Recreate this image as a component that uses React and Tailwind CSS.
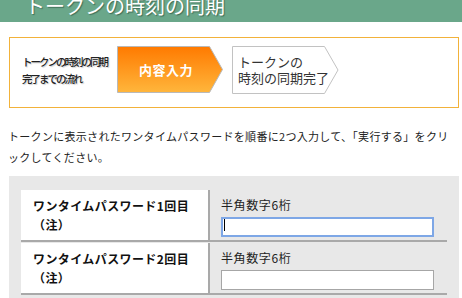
// App.jsx — トークンの時刻の同期 (入力画面)
const JP = "font-['Noto_Sans_CJK_JP','Noto_Sans',sans-serif]"

function OrangeStep() {
  return (
    <div className="relative w-[106px] h-[47px] flex items-center justify-center pr-[8px]">
      <svg className="absolute inset-0" width="106" height="47" viewBox="0 0 106 47">
        <defs>
          <linearGradient id="og" x1="0" y1="0" x2="0" y2="1">
            <stop offset="0" stopColor="#ff7a00" />
            <stop offset="1" stopColor="#ffb63c" />
          </linearGradient>
        </defs>
        <polygon points="0.5,0.5 92.5,0.5 105.5,23.5 92.5,46.5 0.5,46.5" fill="url(#og)" stroke="#b9b9b9" />
      </svg>
      <span className="relative text-[13px] font-bold text-white tracking-[0.5px]">内容入力</span>
    </div>
  )
}

function WhiteStep() {
  return (
    <div className="relative w-[107px] h-[48px] pl-[6px] pt-[8px]">
      <svg className="absolute inset-0" width="107" height="48" viewBox="0 0 107 48">
        <polygon points="0.5,0.5 92.5,0.5 106,24 92.5,47.5 0.5,47.5" fill="#fff" stroke="#c2c2c2" />
      </svg>
      <p className="relative text-[13px] leading-[16px] text-[#333]">
        トークンの<br />時刻の同期完了
      </p>
    </div>
  )
}

function Row({ n, focused }) {
  return (
    <div className="flex border-b-2 border-[#a9a9a9]">
      <div className="w-[189px] h-[50px] bg-white border-r-2 border-[#a9a9a9] pl-[12px] pt-[6px] text-[12px] leading-[19px] font-bold text-[#111] tracking-[0.4px]">
        ワンタイムパスワード{n}回目<br />（注）
      </div>
      <div className="flex-1 pl-[11px] pt-[6px]">
        <p className="text-[12px] leading-[18px] text-[#222] tracking-[0.6px]">半角数字6桁</p>
        <div className="relative mt-[1px] w-[213px] h-[20px]">
          <input
            type="text"
            className={`w-full h-full bg-white outline-none caret-transparent ${
              focused ? 'border-2 border-[#7ea7e6]' : 'border border-[#a6a6a6]'
            }`}
          />
          {focused && <span className="absolute left-[3px] top-[4px] w-[1px] h-[12px] bg-black" />}
        </div>
      </div>
    </div>
  )
}

export default function App() {
  return (
    <div className={`w-[462px] h-[298px] overflow-hidden bg-white ${JP}`}>
      {/* ── Title bar ───────────────────────────── */}
      <div className="h-[22px] bg-[#6aa78a] overflow-hidden pl-[25px]">
        <h1 className="-mt-[4px] text-[20px] leading-[20px] text-white [text-shadow:1px_1px_1px_#3f6e58]">
          トークンの時刻の同期
        </h1>
      </div>

      {/* ── Flow ────────────────────────────────── */}
      <div className="mt-[15px] ml-[9px] w-[450px] h-[71px] border border-[#f2b23a] flex items-start pt-[8px] pl-[12px]">
        <p className="w-[95px] h-[47px] flex items-center text-[10.5px] leading-[17px] font-medium tracking-[-2px] text-[#222] [text-shadow:1px_1px_1px_#cfcfcf]">
          トークンの時刻の同期<br />完了までの流れ
        </p>
        <OrangeStep />
        <div className="w-[9px]" />
        <WhiteStep />
      </div>

      {/* ── Lead ────────────────────────────────── */}
      <p className="mt-[18px] px-[8px] text-[11px] leading-[21px] tracking-[0.3px] text-[#222]">
        トークンに表示されたワンタイムパスワードを順番に2つ入力して、「実行する」をクリ<br />
        ックしてください。
      </p>

      {/* ── Form ────────────────────────────────── */}
      <div className="mt-[8px] ml-[9px] w-[450px] h-[140px] bg-[#e8e8e8] pt-[14px] px-[12px] flex flex-col gap-[1px]">
        <Row n="1" focused />
        <Row n="2" />
      </div>
    </div>
  )
}
